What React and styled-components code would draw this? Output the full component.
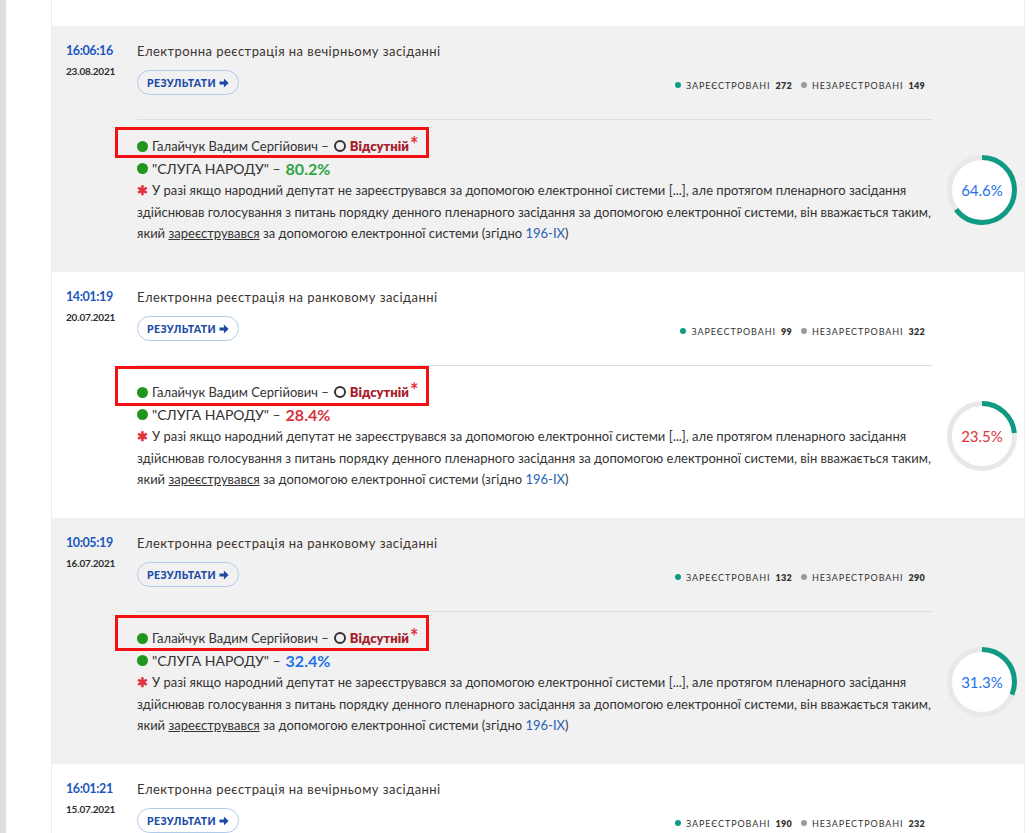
import React from "react";
import styled, { createGlobalStyle } from "styled-components";

const Global = createGlobalStyle`
  html, body { margin: 0; padding: 0; background: #fff; overflow: hidden; }
  body { font-family: Lato, "Open Sans", sans-serif; color: #333; }
`;

const Page = styled.div`
  display: flex;
  width: 1036px;
  height: 833px;
  overflow: hidden;
`;

const SideStrip = styled.div`
  width: 6px;
  background: #dde0e3;
  flex: none;
`;

const Gutter = styled.div`
  width: 45px;
  flex: none;
`;

const List = styled.div`
  width: 972px;
  flex: none;
  border-left: 1px solid #ececec;
  border-right: 1px solid #ececec;
`;

const Cut = styled.div`
  height: 26px;
`;

const Item = styled.div`
  display: grid;
  grid-template-columns: 85px 1fr;
  padding: 16px 7px 28px 0;
  background: ${p => (p.grey ? "#f1f1f1" : "#fff")};
  height: 246px;
  box-sizing: border-box;
`;

const TimeCol = styled.div`
  padding-left: 14px;
`;

const Time = styled.div`
  font-family: Lato, sans-serif;
  font-weight: 700;
  font-size: 12.5px;
  line-height: 18px;
  letter-spacing: -0.4px;
  color: #1b57c0;
`;

const Date = styled.div`
  margin-top: 4px;
  font-weight: 700;
  font-size: 10px;
  line-height: 14px;
  color: #2e2e2e;
  letter-spacing: -0.2px;
`;

const Main = styled.div`
  display: flex;
  flex-direction: column;
`;

const Upper = styled.div`
  margin-right: 85px;
  border-bottom: 1px solid #dedede;
  padding-bottom: 24px;
`;

const Title = styled.div`
  font-family: Lato, sans-serif;
  font-size: 13px;
  line-height: 18px;
  letter-spacing: 0.45px;
  color: #3b342f;
`;

const ActionRow = styled.div`
  display: flex;
  justify-content: space-between;
  align-items: center;
  margin-top: 10px;
  padding-right: 7px;
`;

const Button = styled.button`
  height: 25px;
  padding: 0 9px;
  border: 1px solid #b3cbea;
  border-radius: 13px;
  background: transparent;
  font-family: Lato, sans-serif;
  font-weight: 900;
  font-size: 10.5px;
  letter-spacing: 0.4px;
  color: #1a4aa6;
  display: flex;
  align-items: center;
  gap: 3px;
  cursor: pointer;
`;

const Legend = styled.div`
  display: flex;
  align-items: center;
  gap: 9px;
  padding-top: 5px;
  font-size: 9px;
  letter-spacing: 0.9px;
  color: #333;
`;

const LegendItem = styled.span`
  display: inline-flex;
  align-items: center;
  gap: 5px;
  b { font-weight: 800; letter-spacing: 0.3px; }
  &::before {
    content: "";
    width: 6px;
    height: 6px;
    border-radius: 50%;
    background: ${p => p.color};
  }
`;

const Lower = styled.div`
  display: flex;
  align-items: center;
  padding-top: 15px;
`;

const Texts = styled.div`
  flex: 1;
  font-size: 13px;
  color: #333;
`;

const NameRow = styled.div`
  position: relative;
  line-height: 22px;
  display: flex;
  align-items: center;
`;

const Highlight = styled.span`
  position: absolute;
  left: -22px;
  width: 314px;
  top: ${p => p.top}px;
  bottom: ${p => p.bottom}px;
  border: 3px solid #f40f13;
  box-sizing: border-box;
  pointer-events: none;
`;

const Dot = styled.span`
  display: inline-block;
  width: 11px;
  height: 11px;
  border-radius: 50%;
  background: #21961f;
  margin-right: 4px;
  flex: none;
`;

const Ring = styled.span`
  display: inline-block;
  width: 8px;
  height: 8px;
  border: 2px solid #333;
  border-radius: 50%;
  margin: 0 4px 0 5px;
`;

const Absent = styled.b`
  font-weight: 800;
  color: #a71f2c;
`;

const Star = styled.span`
  color: #e2343e;
  font-weight: 700;
  font-size: 20px;
  line-height: 0;
  position: relative;
  top: -2px;
  margin-left: 1px;
`;

const PartyRow = styled.div`
  line-height: 23px;
  display: flex;
  align-items: center;
  font-size: 14px;
`;

const Pct = styled.b`
  font-weight: 700;
  font-size: 16px;
  margin-left: 5px;
  color: ${p => p.color};
`;

const Note = styled.div`
  font-size: 13px;
  line-height: 21.5px;
  a { color: #2a5fb5; text-decoration: none; }
  u { text-decoration: underline; }
`;

const NoteStar = styled.span`
  color: #e2343e;
  font-weight: 700;
  margin-right: 4px;
`;

const Gauge = styled.div`
  position: relative;
  width: 70px;
  height: 70px;
  flex: none;
  margin-left: 8px;
  svg { display: block; }
`;

const GaugeLabel = styled.span`
  position: absolute;
  inset: 0;
  display: flex;
  align-items: center;
  justify-content: center;
  font-family: Lato, sans-serif;
  font-size: 15px;
  color: ${p => p.color};
`;

const BLUE = "#1f72e6";
const RED = "#d9323d";
const GREEN = "#2ea544";

const rows = [
  { time: "16:06:16", date: "23.08.2021", title: "Електронна реєстрація на вечірньому засіданні", reg: 272, unreg: 149, party: "80.2%", partyColor: GREEN, pct: 64.6, pctColor: BLUE, hl: [-8, -1] },
  { time: "14:01:19", date: "20.07.2021", title: "Електронна реєстрація на ранковому засіданні", reg: 99, unreg: 322, party: "28.4%", partyColor: RED, pct: 23.5, pctColor: RED, hl: [-15, -3] },
  { time: "10:05:19", date: "16.07.2021", title: "Електронна реєстрація на ранковому засіданні", reg: 132, unreg: 290, party: "32.4%", partyColor: BLUE, pct: 31.3, pctColor: BLUE, hl: [-12, -2] },
  { time: "16:01:21", date: "15.07.2021", title: "Електронна реєстрація на вечірньому засіданні", reg: 190, unreg: 232, party: "", partyColor: BLUE, pct: 0, pctColor: BLUE, hl: [-12, -2] },
];

const Donut = ({ value, color }) => {
  const r = 32.5;
  const c = 2 * Math.PI * r;
  return (
    <Gauge>
      <svg width="70" height="70" viewBox="0 0 70 70">
        <circle cx="35" cy="35" r={r} fill="#fff" stroke="#e8e8e8" strokeWidth="5" />
        <circle
          cx="35" cy="35" r={r} fill="none" stroke="#0f9a83" strokeWidth="5"
          strokeDasharray={`${(c * value) / 100} ${c}`}
          transform="rotate(-90 35 35)"
        />
      </svg>
      <GaugeLabel color={color}>{value}%</GaugeLabel>
    </Gauge>
  );
};

const Arrow = () => (
  <svg width="10" height="10" viewBox="0 0 10 10">
    <path d="M0.5 3.6h4.4V0.6L9.6 5 4.9 9.4V6.4H0.5z" fill="currentColor" />
  </svg>
);

export default function App() {
  return (
    <Page>
      <Global />
      <SideStrip />
      <Gutter />
      <List>
        <Cut />
        {rows.map((r, i) => (
          <Item key={r.time} grey={i % 2 === 0}>
            <TimeCol>
              <Time>{r.time}</Time>
              <Date>{r.date}</Date>
            </TimeCol>
            <Main>
              <Upper>
                <Title>{r.title}</Title>
                <ActionRow>
                  <Button>РЕЗУЛЬТАТИ <Arrow /></Button>
                  <Legend>
                    <LegendItem color="#0f9a83">ЗАРЕЄСТРОВАНІ <b>{r.reg}</b></LegendItem>
                    <LegendItem color="#9a9a9a">НЕЗАРЕСТРОВАНІ <b>{r.unreg}</b></LegendItem>
                  </Legend>
                </ActionRow>
              </Upper>
              {r.party && (
                <Lower>
                  <Texts>
                    <NameRow>
                      <Highlight top={r.hl[0]} bottom={r.hl[1]} />
                      <Dot />Галайчук Вадим Сергійович –<Ring /><Absent>Відсутній</Absent><Star>*</Star>
                    </NameRow>
                    <PartyRow>
                      <Dot />"СЛУГА НАРОДУ" –<Pct color={r.partyColor}>{r.party}</Pct>
                    </PartyRow>
                    <Note>
                      <NoteStar>✱</NoteStar>У разі якщо народний депутат не зареєструвався за допомогою електронної системи [...], але протягом пленарного засідання здійснював голосування з питань порядку денного пленарного засідання за допомогою електронної системи, він вважається таким, який <u>зареєструвався</u> за допомогою електронної системи (згідно <a>196-IX</a>)
                    </Note>
                  </Texts>
                  <Donut value={r.pct} color={r.pctColor} />
                </Lower>
              )}
            </Main>
          </Item>
        ))}
      </List>
    </Page>
  );
}
